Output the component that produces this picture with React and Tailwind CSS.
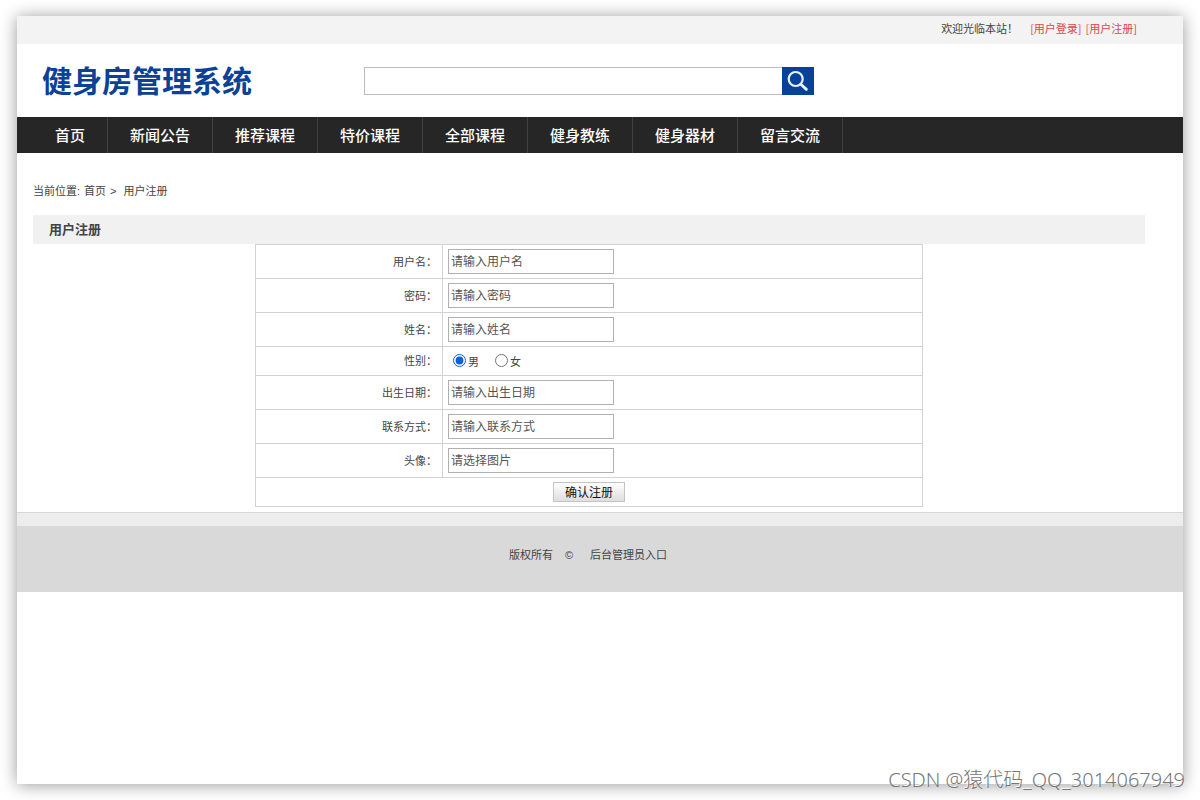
import { useState } from 'react';

const navItems = ['首页', '新闻公告', '推荐课程', '特价课程', '全部课程', '健身教练', '健身器材', '留言交流'];

const fieldsBeforeGender = [
  { id: 'username', label: '用户名', placeholder: '请输入用户名', type: 'text' },
  { id: 'password', label: '密码', placeholder: '请输入密码', type: 'password' },
  { id: 'realname', label: '姓名', placeholder: '请输入姓名', type: 'text' },
];

const fieldsAfterGender = [
  { id: 'birthday', label: '出生日期', placeholder: '请输入出生日期', type: 'text' },
  { id: 'contact', label: '联系方式', placeholder: '请输入联系方式', type: 'text' },
  { id: 'avatar', label: '头像', placeholder: '请选择图片', type: 'text' },
];

function FieldRow({ field }) {
  return (
    <tr className="h-[34px]">
      <th scope="row" className="border border-[#d2d2d2] pr-[5px] text-right font-normal">
        <label htmlFor={field.id}>{field.label}：</label>
      </th>
      <td className="border border-[#d2d2d2] px-[5px]">
        <input
          id={field.id}
          name={field.id}
          type={field.type}
          placeholder={field.placeholder}
          className="block h-[25px] w-[166px] border border-[#b0b0b0] bg-white px-[2px] text-[12px] text-[#444] outline-none placeholder:text-[#555] focus:border-[#0b4197]"
        />
      </td>
    </tr>
  );
}

function GenderOption({ value, checked, onChange }) {
  return (
    <label className="flex items-center gap-[2px]">
      <input
        type="radio"
        name="gender"
        value={value}
        checked={checked}
        onChange={() => onChange(value)}
        className="mb-[2px] size-[13px] accent-[#0b5fe0]"
      />
      <span className="pt-[2px]">{value}</span>
    </label>
  );
}

export default function App() {
  const [gender, setGender] = useState('男');

  return (
    <div className="min-h-screen bg-white px-[17px] py-4 font-['Liberation_Sans','Noto_Sans_CJK_SC',sans-serif] text-[11px] leading-4 text-[#444]">
      <div className="relative min-h-[calc(100vh-32px)] bg-white shadow-[0_1px_16px_rgba(0,0,0,0.4)]">
        <div className="flex h-7 items-center justify-end bg-[#f3f3f3] pr-[46px] pb-1 font-['Noto_Sans_CJK_SC',sans-serif]">
          <span className="mr-3">欢迎光临本站！</span>
          <a href="#login" className="mr-1 text-[#e0454f]">[用户登录]</a>
          <a href="#register" className="text-[#e0454f]">[用户注册]</a>
        </div>

        <header className="flex h-[73px] items-center pl-[25px]">
          <h1 className="w-[322px] shrink-0 pt-[2px] text-[30px] leading-9 font-bold text-[#0b4197]">健身房管理系统</h1>
          <form role="search" className="flex h-7 w-[450px]" onSubmit={(e) => e.preventDefault()}>
            <input
              type="search"
              aria-label="搜索"
              className="min-w-0 flex-1 border border-r-0 border-[#bdbdbd] px-2 text-[12px] outline-none"
            />
            <button type="submit" aria-label="搜索" className="flex w-8 items-center justify-center bg-[#06419a] text-[#eaf2ff]">
              <svg viewBox="0 0 32 28" className="h-7 w-8" fill="none" stroke="currentColor">
                <circle cx="13.7" cy="12" r="7" strokeWidth="2.2" />
                <path d="M18.8 17.2 L24.4 22.4" strokeWidth="2.8" strokeLinecap="round" />
              </svg>
            </button>
          </form>
        </header>

        <nav className="flex h-9 bg-[#262626] pl-4">
          {navItems.map((item) => (
            <a
              key={item}
              href="#nav"
              className="flex items-center border-r border-[#404040] px-[22px] pt-[2px] text-[15px] font-medium text-white hover:bg-[#3a3a3a]"
            >
              {item}
            </a>
          ))}
        </nav>

        <main className="pr-[38px] pb-[5px] pl-4">
          <div className="flex h-[62px] items-center pt-[14px]">
            <span className="mr-1">当前位置:</span>
            <a href="#home" className="mr-1">首页</a>
            <span className="mr-[7px]">&gt;</span>
            <span>用户注册</span>
          </div>

          <h2 className="flex h-[29px] items-center bg-[#f1f1f1] pl-4 text-[13px] font-bold">用户注册</h2>

          <form onSubmit={(e) => e.preventDefault()}>
            <table className="mx-auto w-[60%] table-fixed border-collapse">
              <colgroup>
                <col className="w-[28%]" />
                <col />
              </colgroup>
              <tbody>
                {fieldsBeforeGender.map((field) => (
                  <FieldRow key={field.id} field={field} />
                ))}
                <tr className="h-[29px]">
                  <th scope="row" className="border border-[#d2d2d2] pr-[5px] text-right font-normal">性别：</th>
                  <td className="border border-[#d2d2d2] px-[10px]">
                    <div className="flex items-center gap-4">
                      <GenderOption value="男" checked={gender === '男'} onChange={setGender} />
                      <GenderOption value="女" checked={gender === '女'} onChange={setGender} />
                    </div>
                  </td>
                </tr>
                {fieldsAfterGender.map((field) => (
                  <FieldRow key={field.id} field={field} />
                ))}
                <tr className="h-[29px]">
                  <td colSpan={2} className="border border-[#d2d2d2]">
                    <button
                      type="submit"
                      className="mx-auto flex h-5 w-[72px] items-center justify-center border border-[#c4c4c4] bg-linear-to-b from-white to-[#dedede] pt-[2px] text-[12px] text-[#111]"
                    >
                      确认注册
                    </button>
                  </td>
                </tr>
              </tbody>
            </table>
          </form>
        </main>

        <footer>
          <div className="h-[14px] border-t border-[#d6d6d6] bg-[#ededed]" />
          <div className="flex h-[66px] justify-center bg-[#d9d9d9] pt-[21px] pr-6">
            <span className="mr-3">版权所有</span>
            <span className="mr-[17px]">©</span>
            <a href="#admin">后台管理员入口</a>
          </div>
        </footer>

        <div className="absolute -right-[2px] -bottom-2 font-['Noto_Sans','Noto_Sans_CJK_SC',sans-serif] text-[20px] leading-6 font-light whitespace-nowrap text-[#777] [text-shadow:-1px_-1px_0_rgba(255,255,255,0.8)]">
          CSDN @猿代码_QQ_3014067949
        </div>
      </div>
    </div>
  );
}
